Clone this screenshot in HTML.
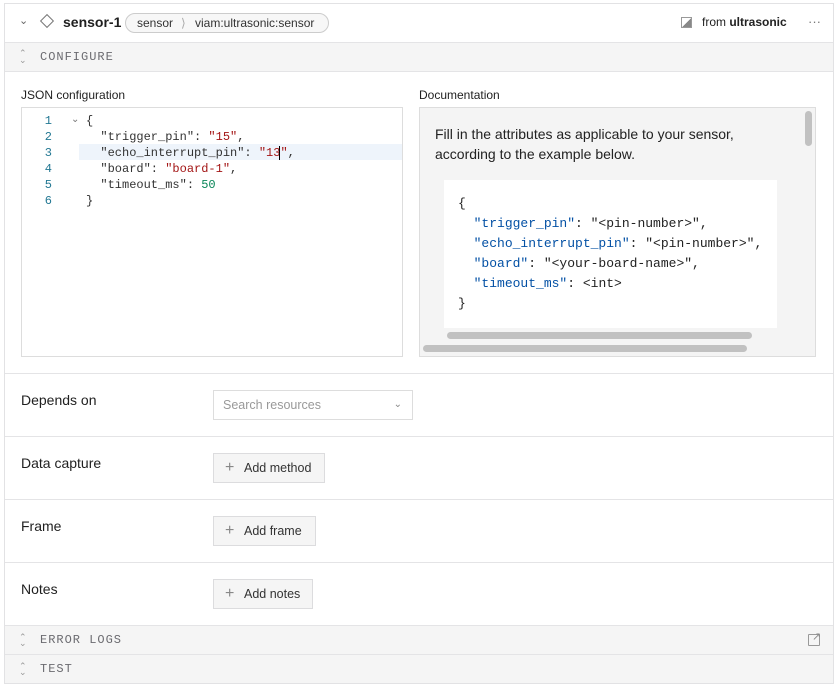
<!DOCTYPE html>
<html><head><meta charset="utf-8"><style>
*{box-sizing:border-box;margin:0;padding:0}
body{width:839px;height:687px;background:#fff;font-family:"Liberation Sans",sans-serif;color:#1f1f1f;position:relative;overflow:hidden}
.a{position:absolute}
.card{left:4px;top:3px;width:830px;height:681px;border:1px solid #e2e2e4}
.hl{left:5px;width:828px;height:1px;background:#e4e4e6}
.bar{left:5px;width:828px;background:#f5f5f5;font-family:"Liberation Mono",monospace;font-size:12px;color:#6b6b70;letter-spacing:1px}
.mono{font-family:"Liberation Mono",monospace;font-size:12px}
.lbl{font-size:14px;color:#1f1f1f}
.btn{border:1px solid #dcdcde;background:#f5f5f5;font-size:12.5px;color:#333;height:30px;line-height:28px;padding-left:30px}
.btn:before{content:"+";position:absolute;left:11px;top:0;font-size:16px;color:#888}
.s{color:#a31515}.n{color:#098658}.k{color:#0451a5}
</style></head><body>
<div class="a card"></div>
<!-- header -->
<div class="a" style="left:19px;top:14px;font-size:11px;color:#666">&#8964;</div>
<div class="a" style="left:42px;top:16px;width:10px;height:10px;border:1.3px solid #777;transform:rotate(45deg)"></div>
<div class="a" style="left:63px;top:14px;font-size:14px;font-weight:bold">sensor-1</div>
<div class="a" style="left:125px;top:13px;width:204px;height:20px;border:1px solid #ccc;border-radius:10px;background:#f7f7f7;font-size:12px;line-height:18px;color:#333"><span style="position:absolute;left:11px">sensor</span><span style="position:absolute;left:55px;color:#aaa">&#10217;</span><span style="position:absolute;left:69px">viam:ultrasonic:sensor</span></div>
<div class="a" style="left:681px;top:17px;width:11px;height:11px;border:1px solid #999;background:linear-gradient(135deg,#fff 50%,#888 50%)"></div>
<div class="a" style="left:702px;top:15px;font-size:12px;color:#222">from <b>ultrasonic</b></div>
<div class="a" style="left:808px;top:14px;font-size:13px;color:#777">···</div>
<div class="a hl" style="top:42px"></div>
<div class="a bar" style="top:43px;height:28px;line-height:28px;padding-left:35px">CONFIGURE</div>
<div class="a" style="left:19px;top:50px;font-size:9px;color:#999;line-height:7px">&#8963;<br>&#8964;</div>
<div class="a hl" style="top:71px"></div>
<!-- JSON -->
<div class="a" style="left:21px;top:88px;font-size:12px">JSON configuration</div>
<div class="a" style="left:21px;top:107px;width:382px;height:250px;border:1px solid #ddd"></div>
<div class="a" style="left:79px;top:144px;width:323px;height:16px;background:#eef4fb"></div>
<div class="a mono" style="left:22px;top:113px;width:34px;text-align:right;line-height:16px;color:#237893;padding-right:4px">1<br>2<br>3<br>4<br>5<br>6</div>
<div class="a" style="left:71px;top:114px;font-size:10px;color:#777">&#8964;</div>
<pre class="a mono" style="left:86px;top:113px;line-height:16px;color:#333">{
  "trigger_pin": <span class="s">"15"</span>,
  "echo_interrupt_pin": <span class="s">"13</span><span style="border-left:1px solid #000;margin-left:-1px"></span><span class="s">"</span>,
  "board": <span class="s">"board-1"</span>,
  "timeout_ms": <span class="n">50</span>
}</pre>
<!-- Docs -->
<div class="a" style="left:419px;top:88px;font-size:12px">Documentation</div>
<div class="a" style="left:419px;top:107px;width:397px;height:250px;border:1px solid #ddd;background:#f4f4f4"></div>
<div class="a" style="left:435px;top:124px;font-size:14px;line-height:20px;color:#222;width:360px">Fill in the attributes as applicable to your sensor, according to the example below.</div>
<div class="a" style="left:444px;top:180px;width:333px;height:148px;background:#fff;overflow:hidden">
<pre class="mono" style="position:absolute;left:14px;top:14px;font-size:13px;line-height:20px;color:#222">{
  <span class="k">"trigger_pin"</span>: "&lt;pin-number&gt;",
  <span class="k">"echo_interrupt_pin"</span>: "&lt;pin-number&gt;",
  <span class="k">"board"</span>: "&lt;your-board-name&gt;",
  <span class="k">"timeout_ms"</span>: &lt;int&gt;
}</pre></div>
<div class="a" style="left:447px;top:332px;width:305px;height:7px;border-radius:4px;background:#c1c1c1"></div>
<div class="a" style="left:423px;top:345px;width:324px;height:7px;border-radius:4px;background:#c1c1c1"></div>
<div class="a" style="left:805px;top:111px;width:7px;height:35px;border-radius:4px;background:#c1c1c1"></div>
<div class="a hl" style="top:373px"></div>
<!-- rows -->
<div class="a lbl" style="left:21px;top:392px">Depends on</div>
<div class="a" style="left:213px;top:390px;width:200px;height:30px;border:1px solid #ddd;font-size:12.5px;color:#999;line-height:28px;padding-left:9px">Search resources<span style="position:absolute;right:10px;top:0;font-size:10px;color:#888">&#8964;</span></div>
<div class="a hl" style="top:436px"></div>
<div class="a lbl" style="left:21px;top:455px">Data capture</div>
<div class="a btn" style="left:213px;top:453px;width:112px">Add method</div>
<div class="a hl" style="top:499px"></div>
<div class="a lbl" style="left:21px;top:518px">Frame</div>
<div class="a btn" style="left:213px;top:516px;width:103px">Add frame</div>
<div class="a hl" style="top:562px"></div>
<div class="a lbl" style="left:21px;top:581px">Notes</div>
<div class="a btn" style="left:213px;top:579px;width:100px">Add notes</div>
<div class="a hl" style="top:625px"></div>
<div class="a bar" style="top:626px;height:28px;line-height:28px;padding-left:35px">ERROR LOGS</div>
<div class="a" style="left:19px;top:634px;font-size:9px;color:#999;line-height:6px">&#8963;<br>&#8964;</div>
<div class="a" style="left:808px;top:634px;width:12px;height:12px;border:1px solid #999;border-radius:1px"></div>
<div class="a" style="left:812px;top:630px;font-size:11px;color:#888">&#8599;</div>
<div class="a hl" style="top:654px"></div>
<div class="a bar" style="top:655px;height:28px;line-height:28px;padding-left:35px">TEST</div>
<div class="a" style="left:19px;top:663px;font-size:9px;color:#999;line-height:6px">&#8963;<br>&#8964;</div>
</body></html>
